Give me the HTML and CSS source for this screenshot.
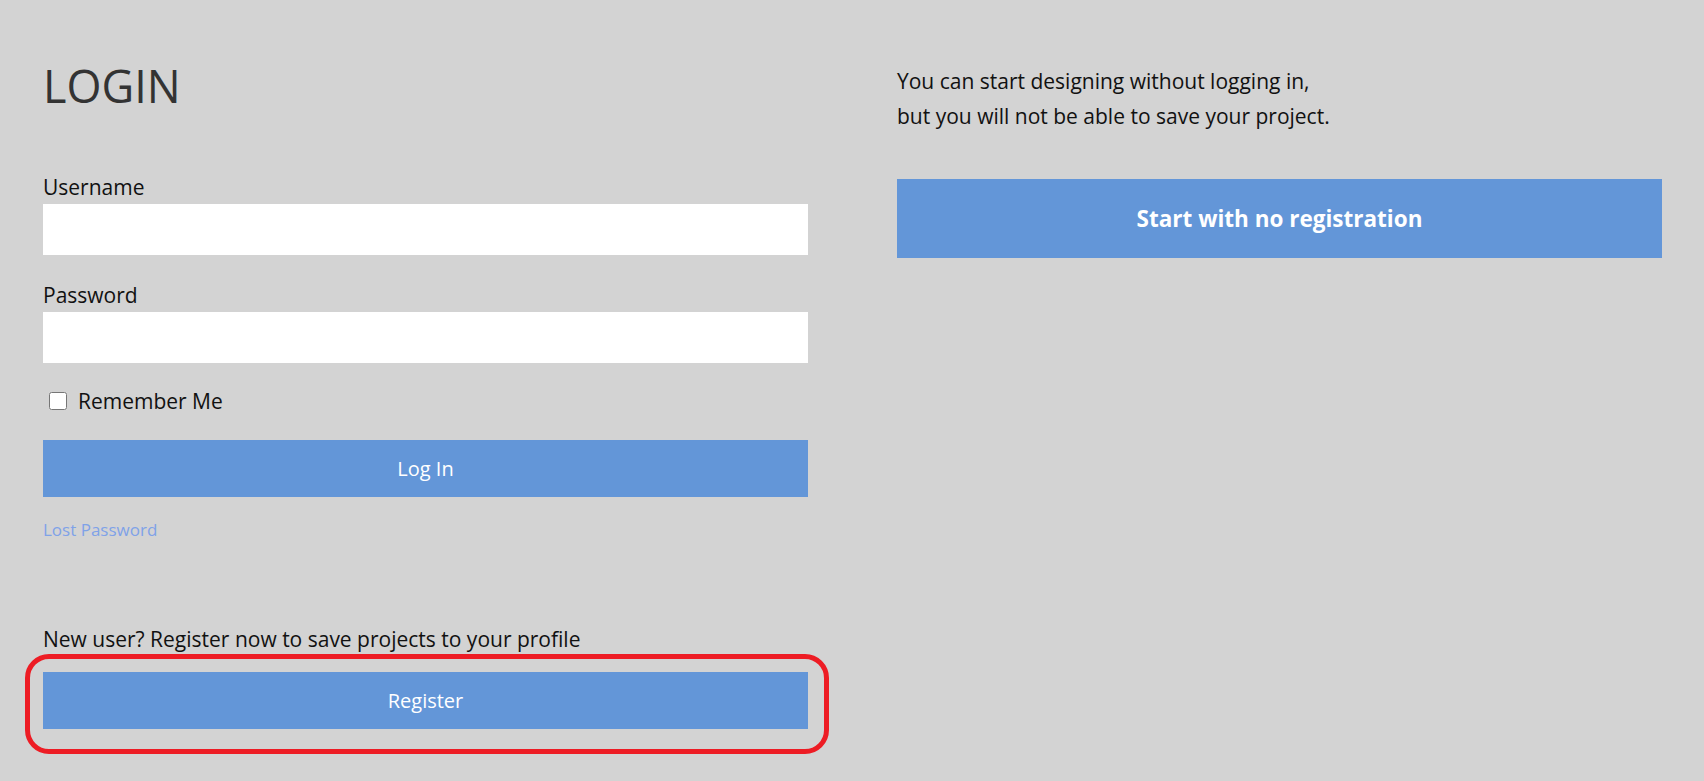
FILE: index.html
```html
<!DOCTYPE html>
<html lang="en">
<head>
    <meta charset="UTF-8">
    <meta name="viewport" content="width=device-width, initial-scale=1.0">
    <title>Login</title>
    <link rel="stylesheet" href="styles.css">
</head>
<body>
    <div class="page">
        <div class="login-col">
            <h1>LOGIN</h1>
            <form class="login-form" onsubmit="return false;">
                <label for="username">Username</label>
                <input type="text" id="username" class="field">
                <label for="password">Password</label>
                <input type="password" id="password" class="field">
                <div class="remember">
                    <input type="checkbox" id="remember">
                    <span>Remember Me</span>
                </div>
                <button type="submit" class="btn">Log In</button>
            </form>
            <a href="#" class="lost-link">Lost Password</a>

            <div class="register-box">
                <p>New user? Register now to save projects to your profile</p>
                <!-- marco rojo de anotacion alrededor del boton -->
                <div class="highlight">
                    <button class="btn">Register</button>
                </div>
            </div>
        </div>

        <div class="guest-col">
            <p>You can start designing without logging in,<br>but you will not be able to save your project.</p>
            <button class="btn btn-big">Start with no registration</button>
        </div>
    </div>
</body>
</html>
```

FILE: styles.css
```css
body {
    margin: 0;
    background-color: #d3d3d3;
    font-family: 'Open Sans', 'Liberation Sans', sans-serif;
    color: #111;
}

.page {
    display: grid;
    grid-template-columns: 765px 765px;
    column-gap: 89px;
    padding: 0 43px;
    min-height: 100vh;
    box-sizing: border-box;
}

h1 {
    font-size: 45px;
    font-weight: 400;
    color: #333;
    line-height: 60px;
    margin: 56px 0 57px 0;
}

.login-form {
    display: flex;
    flex-direction: column;
}

.login-form label {
    font-size: 21px;
    line-height: 28px;
    margin-bottom: 3px;
}

.field {
    height: 51px;
    border: none;
    background-color: #fff;
    margin: 0 0 26px 0;
    padding: 0 12px;
    font-size: 18px;
    box-sizing: border-box;
}

.remember {
    display: flex;
    align-items: center;
    font-size: 21px;
    line-height: 28px;
    margin: -2px 0 25px 0;
}

.remember input {
    width: 18px;
    height: 18px;
    margin: 0 11px 0 6px;
}

.btn {
    display: block;
    width: 100%;
    height: 57px;
    border: none;
    background-color: #6396d8;
    color: #fff;
    font-family: inherit;
    font-size: 20px;
    cursor: pointer;
}

.lost-link {
    display: block;
    margin-top: 22px;
    font-size: 17px;
    line-height: 22px;
    color: #7fa2e8;
    text-decoration: none;
}

.register-box {
    margin-top: 84px;
}

.register-box p {
    margin: 0 0 1px 0;
    font-size: 21px;
    line-height: 28px;
}

.highlight {
    border: 5px solid #ed1c24;
    border-radius: 24px;
    padding: 13px 16px 20px 13px;
    margin: 0 -21px 0 -18px;
}

.guest-col p {
    margin: 64px 0 45px 0;
    font-size: 21px;
    line-height: 35px;
}

.btn-big {
    height: 79px;
    font-size: 22.5px;
    font-weight: 700;
}
```
